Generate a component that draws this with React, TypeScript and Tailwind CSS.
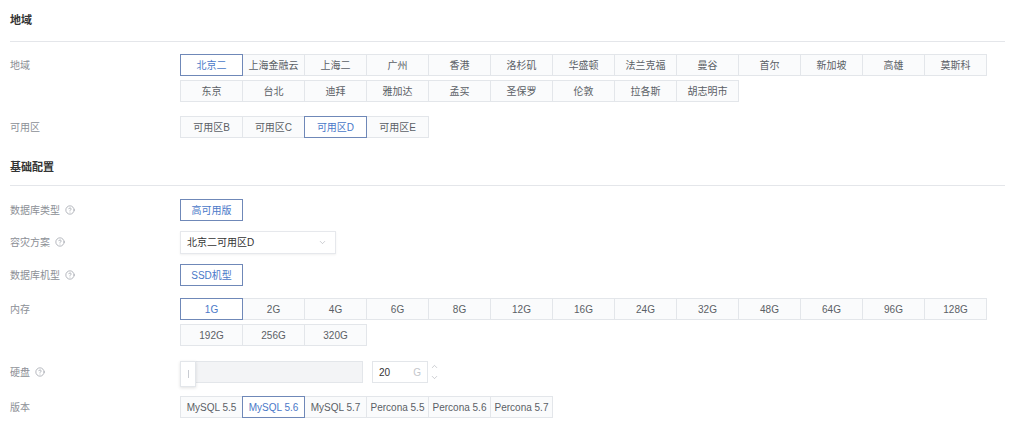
import React, { useState } from 'react';
import { ChevronDown, ChevronUp, CircleHelp } from 'lucide-react';

const regionRows = [
  ['北京二', '上海金融云', '上海二', '广州', '香港', '洛杉矶', '华盛顿', '法兰克福', '曼谷', '首尔', '新加坡', '高雄', '莫斯科'],
  ['东京', '台北', '迪拜', '雅加达', '孟买', '圣保罗', '伦敦', '拉各斯', '胡志明市'],
];
const zones = ['可用区B', '可用区C', '可用区D', '可用区E'];
const memRows = [
  ['1G', '2G', '4G', '6G', '8G', '12G', '16G', '24G', '32G', '48G', '64G', '96G', '128G'],
  ['192G', '256G', '320G'],
];
const versions = ['MySQL 5.5', 'MySQL 5.6', 'MySQL 5.7', 'Percona 5.5', 'Percona 5.6', 'Percona 5.7'];

function Help() {
  return <CircleHelp className="ml-[5px] w-[10px] h-[10px] text-[#8a8f99]" strokeWidth={1.5} />;
}

function Label({ text, help }: { text: string; help?: boolean }) {
  return (
    <div className="w-[170px] shrink-0 flex items-center h-[22px] text-[10px] text-[#8c8f96]">
      {text}
      {help && <Help />}
    </div>
  );
}

function Group({ items, value, onPick }: { items: string[]; value: string; onPick: (v: string) => void }) {
  return (
    <div className="flex">
      {items.map((it, i) => {
        const on = it === value;
        return (
          <button
            key={it}
            onClick={() => onPick(it)}
            className={
              'h-[22px] w-[63px] shrink-0 border text-[10px] flex items-center justify-center ' +
              (i > 0 ? '-ml-px ' : '') +
              (on
                ? 'relative z-10 border-[#6f88b8] bg-white text-[#4a78c8]'
                : 'border-[#e3e6ea] bg-[#fafbfc] text-[#5a5f66]')
            }
          >
            {it}
          </button>
        );
      })}
    </div>
  );
}

function Section({ title, className }: { title: string; className?: string }) {
  return (
    <div className={'mr-[9px] flex items-center border-b border-[#e4e6ea] text-[11px] font-bold text-[#333] ' + (className ?? '')}>
      {title}
    </div>
  );
}

export default function App() {
  const [region, setRegion] = useState('北京二');
  const [zone, setZone] = useState('可用区D');
  const [mem, setMem] = useState('1G');
  const [ver, setVer] = useState('MySQL 5.6');

  return (
    <div className="w-full h-[436px] overflow-hidden bg-white px-[10px] font-['Liberation_Sans','Noto_Sans_CJK_SC',sans-serif]">
      <Section title="地域" className="h-[42px]" />

      <div className="mt-[12px] flex">
        <Label text="地域" />
        <div className="flex flex-col gap-[4px]">
          {regionRows.map((row, i) => (
            <Group key={i} items={row} value={region} onPick={setRegion} />
          ))}
        </div>
      </div>

      <div className="mt-[14px] flex">
        <Label text="可用区" />
        <Group items={zones} value={zone} onPick={setZone} />
      </div>

      <Section title="基础配置" className="mt-[12px] h-[36px]" />

      <div className="mt-[13px] flex">
        <Label text="数据库类型" help />
        <div className="h-[22px] w-[63px] border border-[#6f88b8] text-[10px] text-[#4a78c8] flex items-center justify-center">
          高可用版
        </div>
      </div>

      <div className="mt-[10px] flex">
        <Label text="容灾方案" help />
        <div className="h-[23px] w-[156px] border border-[#e6e8ec] bg-white shadow-[0_1px_2px_rgba(0,0,0,0.06)] flex items-center justify-between pl-[6px] pr-[8px] text-[10px] text-[#333]">
          北京二可用区D
          <ChevronDown className="w-[9px] h-[9px] text-[#a5a9b0]" strokeWidth={1.5} />
        </div>
      </div>

      <div className="mt-[10px] flex">
        <Label text="数据库机型" help />
        <div className="h-[22px] w-[63px] border border-[#6f88b8] text-[10px] text-[#4a78c8] flex items-center justify-center">
          SSD机型
        </div>
      </div>

      <div className="mt-[12px] flex">
        <Label text="内存" />
        <div className="flex flex-col gap-[4px]">
          {memRows.map((row, i) => (
            <Group key={i} items={row} value={mem} onPick={setMem} />
          ))}
        </div>
      </div>

      <div className="mt-[15px] flex">
        <Label text="硬盘" help />
        <div className="flex items-center">
          <div className="relative h-[22px] w-[183px] border border-[#e3e6ea] bg-[#f3f4f6]">
            <div className="absolute -left-px -top-px h-[26px] w-[16px] bg-white border border-[#e3e6ea] shadow-[0_1px_3px_rgba(0,0,0,0.12)] flex items-center justify-center">
              <div className="h-[8px] w-px bg-[#c9ccd2]" />
            </div>
          </div>
          <div className="ml-[9px] h-[22px] w-[56px] border border-[#e3e6ea] bg-white flex items-center justify-between px-[6px] text-[10px]">
            <span className="text-[#333]">20</span>
            <span className="text-[#c4c7cc]">G</span>
          </div>
          <div className="ml-[2px] flex flex-col items-center gap-[2px] text-[#a5a9b0]">
            <ChevronUp className="w-[9px] h-[9px]" strokeWidth={1.5} />
            <ChevronDown className="w-[9px] h-[9px]" strokeWidth={1.5} />
          </div>
        </div>
      </div>

      <div className="mt-[13px] flex">
        <Label text="版本" />
        <Group items={versions} value={ver} onPick={setVer} />
      </div>
    </div>
  );
}
